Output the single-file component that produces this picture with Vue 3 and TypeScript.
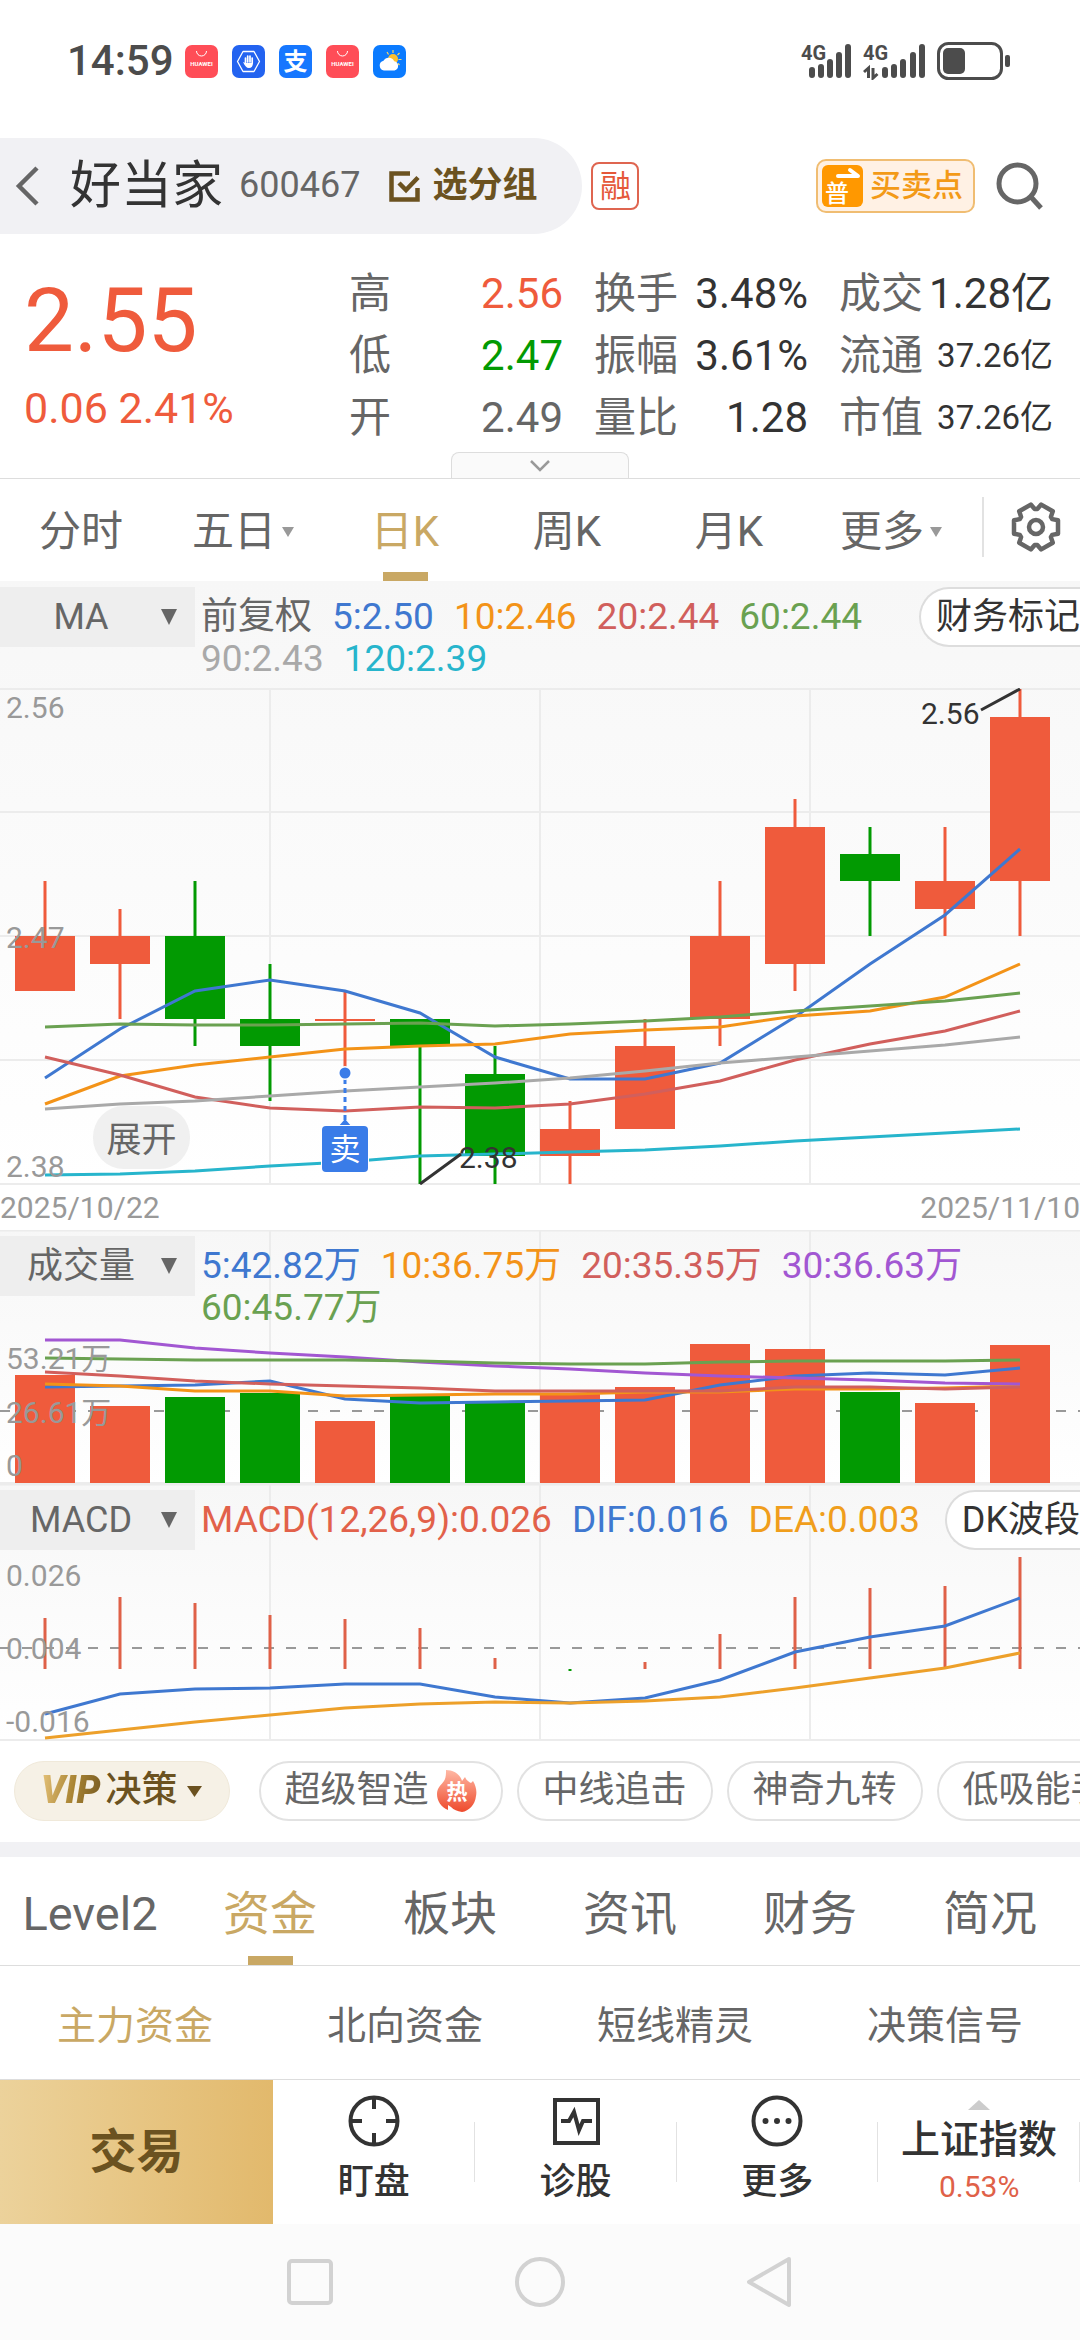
<script setup lang="ts">
import { ref } from 'vue'

type Side = 'up' | 'down'

interface Candle {
  side: Side
  high: number
  low: number
  top: number
  bottom: number
}

interface Series {
  color: string
  ys: number[]
}

const RED = '#ef5b3c'
const GREEN = '#029a02'
const BLUE = '#3f78d0'
const ORANGE = '#f39318'
const ROSE = '#d15f5c'
const LEAF = '#6aa151'
const GRAY = '#a9a9a9'
const CYAN = '#27b5cc'
const PURPLE = '#a257d2'

const quotes = [
  [
    { label: '高', value: '2.56', tone: 'up' },
    { label: '低', value: '2.47', tone: 'down' },
    { label: '开', value: '2.49', tone: 'flat' },
  ],
  [
    { label: '换手', value: '3.48%', tone: '' },
    { label: '振幅', value: '3.61%', tone: '' },
    { label: '量比', value: '1.28', tone: '' },
  ],
  [
    { label: '成交', value: '1.28亿', tone: '' },
    { label: '流通', value: '37.26亿', tone: 'small' },
    { label: '市值', value: '37.26亿', tone: 'small' },
  ],
]

const periods = [
  { name: '分时', menu: false },
  { name: '五日', menu: true },
  { name: '日K', menu: false },
  { name: '周K', menu: false },
  { name: '月K', menu: false },
  { name: '更多', menu: true },
]
const period = ref('日K')

const maLegend = [
  { text: '前复权', color: '#666666' },
  { text: '5:2.50', color: BLUE },
  { text: '10:2.46', color: ORANGE },
  { text: '20:2.44', color: ROSE },
  { text: '60:2.44', color: LEAF },
  { text: '90:2.43', color: GRAY },
  { text: '120:2.39', color: CYAN },
]
const volumeLegend = [
  { text: '5:42.82万', color: BLUE },
  { text: '10:36.75万', color: ORANGE },
  { text: '20:35.35万', color: ROSE },
  { text: '30:36.63万', color: PURPLE },
  { text: '60:45.77万', color: LEAF },
]
const macdLegend = [
  { text: 'MACD(12,26,9):0.026', color: '#e2614a' },
  { text: 'DIF:0.016', color: BLUE },
  { text: 'DEA:0.003', color: '#f09e1c' },
]

const x = (i: number): number => 45 + 75 * i
const priceY = (p: number): number => Math.round((2.56 - p) * 2750) + 1
const points = (ys: number[]): string => ys.map((y, i) => `${x(i)},${y}`).join(' ')
const tint = (side: Side): string => (side === 'up' ? RED : GREEN)

const candles: Candle[] = [
  { side: 'up', high: 2.49, low: 2.45, top: 2.47, bottom: 2.45 },
  { side: 'up', high: 2.48, low: 2.44, top: 2.47, bottom: 2.46 },
  { side: 'down', high: 2.49, low: 2.43, top: 2.47, bottom: 2.44 },
  { side: 'down', high: 2.46, low: 2.41, top: 2.44, bottom: 2.43 },
  { side: 'up', high: 2.45, low: 2.42, top: 2.44, bottom: 2.44 },
  { side: 'down', high: 2.44, low: 2.38, top: 2.44, bottom: 2.43 },
  { side: 'down', high: 2.43, low: 2.38, top: 2.42, bottom: 2.39 },
  { side: 'up', high: 2.41, low: 2.38, top: 2.4, bottom: 2.39 },
  { side: 'up', high: 2.44, low: 2.4, top: 2.43, bottom: 2.4 },
  { side: 'up', high: 2.49, low: 2.43, top: 2.47, bottom: 2.44 },
  { side: 'up', high: 2.52, low: 2.45, top: 2.51, bottom: 2.46 },
  { side: 'down', high: 2.51, low: 2.47, top: 2.5, bottom: 2.49 },
  { side: 'up', high: 2.51, low: 2.47, top: 2.49, bottom: 2.48 },
  { side: 'up', high: 2.56, low: 2.47, top: 2.55, bottom: 2.49 },
]
const bodyHeight = (c: Candle): number => Math.max(2, priceY(c.bottom) - priceY(c.top))

const maLines: Series[] = [
  { color: CYAN, ys: [487, 486, 483, 478, 474, 468, 466, 464, 462, 458, 453, 449, 445, 441] },
  { color: BLUE, ys: [390, 341, 303, 292, 303, 325, 369, 391, 391, 375, 329, 276, 227, 161] },
  { color: ORANGE, ys: [416, 388, 377, 369, 361, 358, 356, 346, 342, 339, 328, 323, 309, 276] },
  { color: ROSE, ys: [369, 387, 409, 420, 423, 419, 420, 416, 406, 393, 372, 356, 343, 323] },
  { color: LEAF, ys: [339, 336, 337, 337, 336, 335, 338, 336, 333, 329, 323, 318, 313, 305] },
  { color: GRAY, ys: [421, 416, 413, 408, 403, 399, 395, 390, 383, 375, 369, 363, 357, 349] },
]

const volumes = [145, 176, 167, 163, 191, 166, 172, 164, 157, 114, 119, 162, 173, 115]
const volumeLines: Series[] = [
  { color: BLUE, ys: [157, 156, 155, 151, 169, 173, 172, 171, 170, 155, 146, 143, 145, 138] },
  { color: ORANGE, ys: [154, 156, 161, 161, 166, 165, 164, 164, 162, 162, 159, 159, 158, 156] },
  { color: ROSE, ys: [142, 146, 151, 154, 156, 158, 161, 161, 161, 161, 157, 157, 159, 157] },
  { color: PURPLE, ys: [110, 110, 118, 123, 127, 132, 136, 139, 143, 146, 148, 150, 153, 154] },
  { color: LEAF, ys: [128, 129, 130, 130, 130, 131, 133, 134, 134, 132, 131, 131, 131, 130] },
]

const MACD_ZERO = 185
const macdTips = [134, 113, 119, 131, 135, 144, 174, 187, 178, 150, 113, 104, 102, 73]
const macdLines: Series[] = [
  { color: BLUE, ys: [230, 210, 205, 204, 200, 200, 213, 219, 214, 196, 168, 153, 142, 114] },
  { color: '#eda02a', ys: [254, 246, 238, 231, 224, 220, 218, 219, 217, 213, 204, 194, 184, 169] },
]

const ideas = [
  { name: '超级智造', hot: true },
  { name: '中线追击', hot: false },
  { name: '神奇九转', hot: false },
  { name: '低吸能手', hot: false },
]

const sections = ['Level2', '资金', '板块', '资讯', '财务', '简况']
const section = ref('资金')
const topics = ['主力资金', '北向资金', '短线精灵', '决策信号']
const topic = ref('主力资金')

const polar = (r: number, deg: number): string => {
  const a = (deg * Math.PI) / 180
  return `${(26 + r * Math.cos(a)).toFixed(1)},${(26 + r * Math.sin(a)).toFixed(1)}`
}
const gear = [0, 60, 120, 180, 240, 300]
  .flatMap((a) => [polar(18, a - 26), polar(23, a - 17), polar(23, a + 17), polar(18, a + 26)])
  .join(' ')
</script>

<template>
  <main class="app">
    <div class="status">
      <time class="clock">14:59</time>
      <div class="apps">
        <svg width="33" height="33" viewBox="0 0 33 33">
          <rect width="33" height="33" rx="7" fill="#ff4d57" />
          <path d="M11.500 6a5 5 0 0 0 10 0" fill="none" stroke="#fff" stroke-width="1" />
          <text x="16.500" y="21" class="tiny">HUAWEI</text>
        </svg>
        <svg width="33" height="33" viewBox="0 0 33 33">
          <rect width="33" height="33" rx="7" fill="#2363f0" />
          <path d="M11 6.500h11l5.500 10-5.500 10H11l-5.500-10z" fill="none" stroke="#fff" stroke-width="1.300" stroke-linejoin="round" />
          <path d="M13.500 18v-5M15.700 17v-6M18 17v-6M20.200 18v-5" stroke="#fff" stroke-width="1.700" stroke-linecap="round" />
          <path d="M11 17l2.500 1h7.500c0 3-1.500 5-4 5s-4-2-6-6z" fill="#fff" />
        </svg>
        <svg width="33" height="33" viewBox="0 0 33 33">
          <rect width="33" height="33" rx="7" fill="#1677ff" />
          <text x="16.500" y="25" class="ali">支</text>
        </svg>
        <svg width="33" height="33" viewBox="0 0 33 33">
          <rect width="33" height="33" rx="7" fill="#ff4d57" />
          <path d="M11.500 6a5 5 0 0 0 10 0" fill="none" stroke="#fff" stroke-width="1" />
          <text x="16.500" y="21" class="tiny">HUAWEI</text>
        </svg>
        <svg width="33" height="33" viewBox="0 0 33 33">
          <rect width="33" height="33" rx="7" fill="#0b7bff" />
          <path d="M20 5v3M26.500 8l-2 2M28.500 14.500h-3M14 7l1.500 2.500M26.500 20l-1.500-1.500" stroke="#ffd75e" stroke-width="1.200" />
          <circle cx="20" cy="14" r="5" fill="#ffc02e" />
          <path d="M11 25.500a5 5 0 0 1-.5-9.800 6 6 0 0 1 10.700.6 4.700 4.700 0 0 1 .3 9.200z" fill="#fff" />
        </svg>
      </div>
      <div class="radio">
        <svg width="52" height="38" viewBox="0 0 52 38">
          <text x="0" y="18" class="net">4G</text>
          <path d="M11 28v5M20 25v8M29 20v13M38 13v20M47 5v28" class="bars" />
        </svg>
        <svg width="64" height="38" viewBox="0 0 64 38">
          <text x="0" y="18" class="net">4G</text>
          <path d="M5.500 36V26L1 30M10 26v10l4.500-4" class="arrows" />
          <path d="M22 28v5M31 25v8M40 20v13M50 13v20M59 5v28" class="bars" />
        </svg>
        <svg width="75" height="38" viewBox="0 0 75 38">
          <rect x="1.500" y="1.500" width="63" height="35" rx="10" fill="none" stroke="#4c4c4c" stroke-width="3" />
          <rect x="6" y="6" width="22" height="26" rx="5" fill="#4c4c4c" />
          <rect x="68" y="13" width="5" height="12" rx="2" fill="#4c4c4c" />
        </svg>
      </div>
    </div>

    <header class="head">
      <div class="pill">
        <button class="back" aria-label="返回">
          <svg width="24" height="40" viewBox="0 0 24 40"><path d="M22 2L4 20l18 18" fill="none" stroke="#666" stroke-width="4.500" /></svg>
        </button>
        <h1>好当家</h1>
        <span class="code">600467</span>
        <button class="group">
          <svg width="31" height="31" viewBox="0 0 31 31">
            <path d="M21 2.500H2.500v26h26V17" fill="none" stroke="#6b5220" stroke-width="4.500" />
            <path d="M10 12l7 7L29 6.500" fill="none" stroke="#6b5220" stroke-width="4.500" />
          </svg>
          选分组
        </button>
      </div>
      <span class="margin-tag">融</span>
      <button class="signal">
        <svg width="41" height="42" viewBox="0 0 41 42">
          <rect width="41" height="42" rx="6" fill="#ff9800" />
          <path d="M16 11h20l-8-6" fill="none" stroke="#fff" stroke-width="4" stroke-linecap="round" stroke-linejoin="round" />
          <text x="15" y="37" class="pu">普</text>
        </svg>
        买卖点
      </button>
      <button class="search" aria-label="搜索">
        <svg width="48" height="48" viewBox="0 0 48 48">
          <circle cx="21.500" cy="21.500" r="18.500" fill="none" stroke="#666" stroke-width="5" />
          <path d="M35 35l10 11" stroke="#666" stroke-width="5" />
        </svg>
      </button>
    </header>

    <section class="quote">
      <div class="price">
        <strong>2.55</strong>
        <span>0.06 2.41%</span>
      </div>
      <div class="stats">
        <dl v-for="(col, c) in quotes" :key="c">
          <div v-for="q in col" :key="q.label">
            <dt>{{ q.label }}</dt>
            <dd :class="q.tone">{{ q.value }}</dd>
          </div>
        </dl>
      </div>
    </section>
    <div class="handle-row">
      <button class="handle" aria-label="展开行情">
        <svg width="22" height="14" viewBox="0 0 22 14"><path d="M2 2l9 9 9-9" fill="none" stroke="#999" stroke-width="2.500" /></svg>
      </button>
    </div>

    <nav class="periods">
      <button v-for="p in periods" :key="p.name" :class="{ on: period === p.name }" @click="period = p.name">
        {{ p.name }}
        <svg v-if="p.menu" width="12" height="10" viewBox="0 0 12 10"><path d="M0 0h12L6 10z" fill="#999" /></svg>
      </button>
      <button class="settings" aria-label="设置">
        <svg width="52" height="52" viewBox="0 0 52 52">
          <polygon :points="gear" fill="none" stroke="#666" stroke-width="4.500" stroke-linejoin="round" />
          <circle cx="26" cy="26" r="7" fill="none" stroke="#666" stroke-width="4.500" />
        </svg>
      </button>
    </nav>

    <section class="kline">
      <div class="tools">
        <label class="picker">
          <select aria-label="主图指标"><option>MA</option></select>
          <svg width="16" height="16" viewBox="0 0 16 16"><path d="M0 0h16L8 16z" fill="#666" /></svg>
        </label>
        <p class="legend">
          <span v-for="l in maLegend" :key="l.text" :style="{ color: l.color }">{{ l.text }}</span>
        </p>
        <button class="edge">财务标记</button>
      </div>
      <svg class="chart" viewBox="0 0 1080 497">
        <path d="M0 1H1080M0 124H1080M0 248H1080M0 372H1080M0 496H1080M270 0V496M540 0V496M810 0V496" class="grid" />
        <g v-for="(c, i) in candles" :key="i" :fill="tint(c.side)">
          <rect :x="x(i) - 1.5" :y="priceY(c.high)" width="3" :height="priceY(c.low) - priceY(c.high)" />
          <rect :x="x(i) - 30" :y="priceY(c.top)" width="60" :height="bodyHeight(c)" />
        </g>
        <polyline v-for="s in maLines" :key="s.color" :points="points(s.ys)" :stroke="s.color" class="line" />
        <text x="6" y="30" class="axis">2.56</text>
        <text x="6" y="260" class="axis">2.47</text>
        <text x="6" y="489" class="axis">2.38</text>
        <text x="921" y="36" class="mark">2.56</text>
        <path d="M981 22L1020 1M420 496L461 466" class="leader" />
        <text x="459" y="480" class="mark">2.38</text>
        <path d="M345 391V432" stroke="#3a7ce8" stroke-width="3" stroke-dasharray="5 4" />
        <circle cx="345" cy="385" r="7" fill="#fff" />
        <circle cx="345" cy="385" r="5.500" fill="#3a7ce8" />
        <path d="M345 431l7 8h-14z" fill="#3a7ce8" />
        <rect x="321" y="437" width="48" height="48" rx="4" fill="#fff" />
        <rect x="322" y="438" width="46" height="46" rx="4" fill="#3a7ce8" />
        <text x="345" y="472" class="sell">卖</text>
        <g class="expand" role="button">
          <rect x="93" y="418" width="97" height="63" rx="31" />
          <text x="141.500" y="464">展开</text>
        </g>
      </svg>
    </section>
    <div class="dates">
      <time>2025/10/22</time>
      <time>2025/11/10</time>
    </div>

    <section class="panel">
      <svg class="chart" viewBox="0 0 1080 254">
        <path d="M0 0.500H1080M0 253H1080M270 0V253M540 0V253M810 0V253" class="grid" />
        <path d="M0 181H1080" class="dash" />
        <rect v-for="(v, i) in volumes" :key="i" :x="x(i) - 30" :y="v" width="60" :height="253 - v" :fill="tint(candles[i].side)" />
        <polyline v-for="s in volumeLines" :key="s.color" :points="points(s.ys)" :stroke="s.color" class="line" />
        <text x="6" y="139" class="axis">53.21万</text>
        <text x="6" y="193" class="axis">26.61万</text>
        <text x="6" y="246" class="axis">0</text>
      </svg>
      <div class="tools">
        <label class="picker">
          <select aria-label="副图指标一"><option>成交量</option></select>
          <svg width="16" height="16" viewBox="0 0 16 16"><path d="M0 0h16L8 16z" fill="#666" /></svg>
        </label>
        <p class="legend">
          <span v-for="l in volumeLegend" :key="l.text" :style="{ color: l.color }">{{ l.text }}</span>
        </p>
      </div>
    </section>

    <section class="panel">
      <svg class="chart" viewBox="0 0 1080 257">
        <path d="M0 0.500H1080M0 256H1080M270 0V256M540 0V256M810 0V256" class="grid" />
        <path d="M0 164H1080" class="dash" />
        <rect
          v-for="(t, i) in macdTips"
          :key="i"
          :x="x(i) - 1.5"
          :y="Math.min(t, MACD_ZERO)"
          width="3"
          :height="Math.abs(MACD_ZERO - t)"
          :fill="t > MACD_ZERO ? GREEN : '#df6148'"
        />
        <polyline v-for="s in macdLines" :key="s.color" :points="points(s.ys)" :stroke="s.color" class="line" />
        <text x="6" y="102" class="axis">0.026</text>
        <text x="6" y="175" class="axis">0.004</text>
        <text x="6" y="248" class="axis">-0.016</text>
      </svg>
      <div class="tools">
        <label class="picker">
          <select aria-label="副图指标二"><option>MACD</option></select>
          <svg width="16" height="16" viewBox="0 0 16 16"><path d="M0 0h16L8 16z" fill="#666" /></svg>
        </label>
        <p class="legend">
          <span v-for="l in macdLegend" :key="l.text" :style="{ color: l.color }">{{ l.text }}</span>
        </p>
        <button class="edge">DK波段</button>
      </div>
    </section>

    <div class="ideas">
      <button class="vip">
        <em>VIP</em>决策
        <svg width="15" height="11" viewBox="0 0 15 11"><path d="M0 0h15L7.500 11z" fill="#6b5220" /></svg>
      </button>
      <button v-for="d in ideas" :key="d.name" class="idea">
        {{ d.name }}
        <svg v-if="d.hot" width="40" height="42" viewBox="0 0 40 42">
          <defs>
            <linearGradient id="flame" x1="0" y1="0" x2="0" y2="1">
              <stop offset="0" stop-color="#ffb8a4" />
              <stop offset="1" stop-color="#ee4a2c" />
            </linearGradient>
          </defs>
          <path d="M9 0c6 0 14 3 16 11l3-4c1 3 4 5 6 6l2-2c3 5 4 10 3 15-1 9-7 15-14 16-5-1-8-2-11-5l-3-2v5C4 37 0 31 0 24c0-6 4-9 7-13 2-3 2-7 2-11z" fill="url(#flame)" />
          <text x="20" y="29" class="hot">热</text>
        </svg>
      </button>
    </div>

    <nav class="sections">
      <button v-for="s in sections" :key="s" :class="{ on: section === s }" @click="section = s">{{ s }}</button>
    </nav>
    <nav class="topics">
      <button v-for="t in topics" :key="t" :class="{ on: topic === t }" @click="topic = t">{{ t }}</button>
    </nav>

    <footer class="dock">
      <button class="trade">交易</button>
      <button class="tool">
        <svg width="52" height="52" viewBox="0 0 52 52" fill="none" stroke="#333" stroke-width="4">
          <circle cx="26" cy="26" r="23.500" />
          <path d="M26 3v11M26 38v11M3 26h11M38 26h11" />
        </svg>
        盯盘
      </button>
      <button class="tool">
        <svg width="52" height="52" viewBox="0 0 52 52" fill="none" stroke="#333" stroke-width="4">
          <rect x="5" y="5" width="43" height="43" />
          <path d="M11 26h8l5-9 5 18 4-9h9" />
        </svg>
        诊股
      </button>
      <button class="tool">
        <svg width="52" height="52" viewBox="0 0 52 52">
          <circle cx="26" cy="26" r="23.500" fill="none" stroke="#333" stroke-width="4" />
          <g fill="#333"><circle cx="14.500" cy="26" r="3" /><circle cx="26" cy="26" r="3" /><circle cx="37.500" cy="26" r="3" /></g>
        </svg>
        更多
      </button>
      <button class="index">
        <svg width="22" height="10" viewBox="0 0 22 10"><path d="M11 0l11 10H0z" fill="#ccc" /></svg>
        <b>上证指数</b>
        <span>0.53%</span>
      </button>
    </footer>

    <nav class="system">
      <button aria-label="最近任务">
        <svg width="52" height="52" viewBox="0 0 52 52"><rect x="5" y="5" width="42" height="42" rx="3" /></svg>
      </button>
      <button aria-label="主屏幕">
        <svg width="52" height="52" viewBox="0 0 52 52"><circle cx="26" cy="26" r="23" /></svg>
      </button>
      <button aria-label="返回上一级">
        <svg width="52" height="52" viewBox="0 0 52 52"><path d="M45 3L5 26l40 23z" stroke-linejoin="round" /></svg>
      </button>
    </nav>
  </main>
</template>

<style>
body {
  background: #fff;
}
</style>

<style scoped>
.app {
  overflow: hidden;
  color: #333;
  font-family: Roboto, "Noto Sans CJK SC", sans-serif;
  font-size: 36px;
  line-height: 1.2;
  white-space: nowrap;
}

.app * {
  box-sizing: border-box;
}

button,
select {
  margin: 0;
  padding: 0;
  border: 0;
  border-radius: 0;
  background: none;
  color: inherit;
  font: inherit;
}

svg {
  display: block;
  flex: none;
}

text {
  font-family: Roboto, "Noto Sans CJK SC", sans-serif;
}

/* status bar */
.status {
  display: flex;
  align-items: center;
  height: 138px;
  padding: 0 68px 16px 67px;
}

.clock {
  color: #4c4c4c;
  font-size: 42px;
  font-weight: 500;
}

.apps {
  display: flex;
  gap: 14px;
  margin-left: 11px;
}

.tiny {
  fill: #fff;
  font-size: 6px;
  font-weight: 700;
  text-anchor: middle;
}

.ali {
  fill: #fff;
  font-size: 24px;
  font-weight: 700;
  text-anchor: middle;
}

.radio {
  display: flex;
  gap: 10px;
  margin-left: auto;
}

.net {
  fill: #4c4c4c;
  font-size: 20px;
  font-weight: 700;
}

.bars {
  fill: none;
  stroke: #4c4c4c;
  stroke-width: 6;
  stroke-linecap: round;
}

.arrows {
  fill: none;
  stroke: #4c4c4c;
  stroke-width: 3;
}

/* title bar */
.head {
  display: flex;
  align-items: center;
  height: 96px;
  padding-right: 36px;
}

.pill {
  display: flex;
  align-items: center;
  height: 96px;
  padding-right: 45px;
  border-radius: 0 48px 48px 0;
  background: #f1f1f4;
}

.back {
  width: 70px;
  padding-left: 15px;
}

h1 {
  margin: 0;
  font-size: 51px;
  font-weight: 400;
}

.code {
  margin-left: 16px;
  color: #666;
}

.group {
  display: flex;
  align-items: center;
  gap: 12px;
  margin-left: 29px;
  color: #6b5220;
  font-size: 35px;
  font-weight: 700;
}

.margin-tag {
  width: 48px;
  height: 48px;
  margin-left: 9px;
  border: 2px solid #df6550;
  border-radius: 8px;
  color: #e5583a;
  font-size: 31px;
  line-height: 46px;
  text-align: center;
}

.signal {
  display: flex;
  align-items: center;
  gap: 7px;
  height: 54px;
  margin-left: auto;
  padding: 0 10px 0 4px;
  border: 2px solid #f0bd72;
  border-radius: 10px;
  background: #fff1e4;
  color: #f39a17;
  font-size: 31px;
  font-weight: 500;
}

.pu {
  fill: #fff;
  font-size: 24px;
  font-weight: 500;
  text-anchor: middle;
}

.search {
  margin-left: 21px;
}

/* quote */
.quote {
  display: flex;
  padding: 29px 27px 0 24px;
}

.price {
  flex: 0 0 325px;
  padding-top: 3px;
  color: #ef5b3c;
}

.price strong {
  display: block;
  font-size: 89px;
  font-weight: 400;
  line-height: 110px;
}

.price span {
  display: block;
  font-size: 43px;
  line-height: 64px;
}

.stats {
  display: grid;
  flex: 1;
  grid-template-columns: repeat(3, 1fr);
  gap: 31px;
  font-size: 42px;
}

dl {
  margin: 0;
}

dl div {
  display: flex;
  justify-content: space-between;
  line-height: 62px;
}

dt {
  color: #666;
}

dd {
  margin: 0;
}

dd.up {
  color: #ef5b3c;
}

dd.down {
  color: #029a02;
}

dd.flat {
  color: #666;
}

dd.small {
  font-size: 33px;
}

.handle-row {
  display: flex;
  justify-content: center;
  margin-top: 3px;
  border-bottom: 1px solid #ddd;
}

.handle {
  display: flex;
  align-items: center;
  justify-content: center;
  width: 178px;
  height: 26px;
  border: 1px solid #ddd;
  border-bottom: 0;
  border-radius: 8px 8px 0 0;
  background: #fafafa;
}

/* period tabs */
.periods {
  display: grid;
  grid-template-columns: repeat(6, 3fr) 2fr;
  height: 102px;
  color: #666;
  font-size: 42px;
}

.periods button {
  display: flex;
  align-items: center;
  justify-content: center;
  gap: 6px;
  padding-top: 4px;
}

.on {
  color: #c9a864;
  background: linear-gradient(#c9a864, #c9a864) center bottom / 45px 9px no-repeat;
}

.periods .settings {
  height: 60px;
  margin: 18px 0 0 10px;
  padding: 0 0 0 7px;
  border-left: 2px solid #e2e2e2;
}

/* charts */
.kline {
  background: linear-gradient(#f7f7f7, #fff);
}

.kline .tools {
  height: 107px;
}

.tools {
  display: flex;
  align-items: flex-start;
  padding-top: 6px;
}

.picker {
  position: relative;
  flex: none;
  width: 195px;
}

.picker select {
  display: block;
  width: 100%;
  height: 60px;
  padding: 2px 33px 0 0;
  background: #eee;
  color: #666;
  text-align: center;
  appearance: none;
}

.picker svg {
  position: absolute;
  top: 22px;
  right: 18px;
  pointer-events: none;
}

.legend {
  display: flex;
  flex: 1;
  flex-wrap: wrap;
  column-gap: 20px;
  margin: 0;
  padding: 9px 0 0 6px;
  font-size: 37px;
  line-height: 42px;
}

.edge {
  height: 60px;
  padding: 2px 0 0 15px;
  border: 2px solid #ddd;
  border-right: 0;
  border-radius: 30px 0 0 30px;
  background: #fff;
}

.chart {
  width: 100%;
  height: auto;
}

.grid {
  fill: none;
  stroke: #ececec;
  stroke-width: 2;
}

.dash {
  fill: none;
  stroke: #999;
  stroke-width: 2;
  stroke-dasharray: 10 12;
}

.line {
  fill: none;
  stroke-width: 3;
}

.axis {
  fill: #999;
  font-size: 30px;
}

.mark {
  fill: #333;
  font-size: 30px;
}

.leader {
  fill: none;
  stroke: #333;
  stroke-width: 3;
}

.sell {
  fill: #fff;
  font-size: 31px;
  text-anchor: middle;
}

.expand rect {
  fill: #f0f0f0;
}

.expand text {
  fill: #666;
  font-size: 35px;
  text-anchor: middle;
}

.dates {
  display: flex;
  justify-content: space-between;
  color: #999;
  font-size: 30px;
  line-height: 45px;
}

.panel {
  display: grid;
  background: linear-gradient(#f7f7f7, #fff);
}

.panel > * {
  grid-area: 1 / 1;
}

/* strategy chips */
.ideas {
  display: flex;
  gap: 14px;
  padding: 20px 0 21px 14px;
  border-bottom: 15px solid #f1f1f4;
}

.ideas button {
  display: flex;
  flex: none;
  align-items: center;
  height: 60px;
  border: 2px solid #e2e2e2;
  border-radius: 30px;
}

.ideas .idea {
  gap: 8px;
  padding: 0 24px;
  color: #666;
}

.ideas .vip {
  margin-right: 15px;
  padding: 0 27px 0 26px;
  border: 1px solid #f0e9da;
  background: #f6f1e6;
  color: #6b5220;
  font-weight: 500;
}

.vip em {
  padding-right: 5px;
  background: linear-gradient(100deg, #e8c57c, #a88332 50%, #6b5220);
  background-clip: text;
  color: transparent;
  font-size: 38px;
  font-weight: 900;
}

.vip svg {
  margin-left: 9px;
}

.hot {
  fill: #fff;
  font-size: 21px;
  font-weight: 700;
  text-anchor: middle;
}

/* content tabs */
.sections,
.topics {
  display: grid;
  grid-auto-columns: 1fr;
  grid-auto-flow: column;
  border-bottom: 1px solid #ddd;
  color: #666;
}

.sections {
  height: 109px;
  padding-top: 6px;
  font-size: 47px;
}

.topics {
  height: 114px;
  padding-top: 8px;
  font-size: 39px;
}

.topics .on {
  background: none;
}

/* bottom bar */
.dock {
  display: grid;
  grid-template-columns: 273px repeat(4, 1fr);
  height: 144px;
}

.trade {
  background: linear-gradient(90deg, #ecd29b, #e2b96c);
  color: #6b5220;
  font-size: 47px;
  font-weight: 700;
}

.tool,
.index {
  display: flex;
  flex-direction: column;
  align-items: center;
  background: linear-gradient(#e2e2e2, #e2e2e2) right 42px / 1px 60px no-repeat;
}

.tool {
  gap: 11px;
  padding-top: 15px;
  font-weight: 500;
  line-height: 48px;
}

.index {
  padding-top: 20px;
}

.index b {
  font-size: 39px;
  font-weight: 500;
  line-height: 60px;
}

.index span {
  color: #df6148;
  font-size: 30px;
  line-height: 34px;
}

.system {
  display: flex;
  justify-content: center;
  gap: 178px;
  height: 116px;
  background: #fbfbfb;
}

.system svg {
  fill: none;
  stroke: #d2d2d2;
  stroke-width: 4;
}
</style>
